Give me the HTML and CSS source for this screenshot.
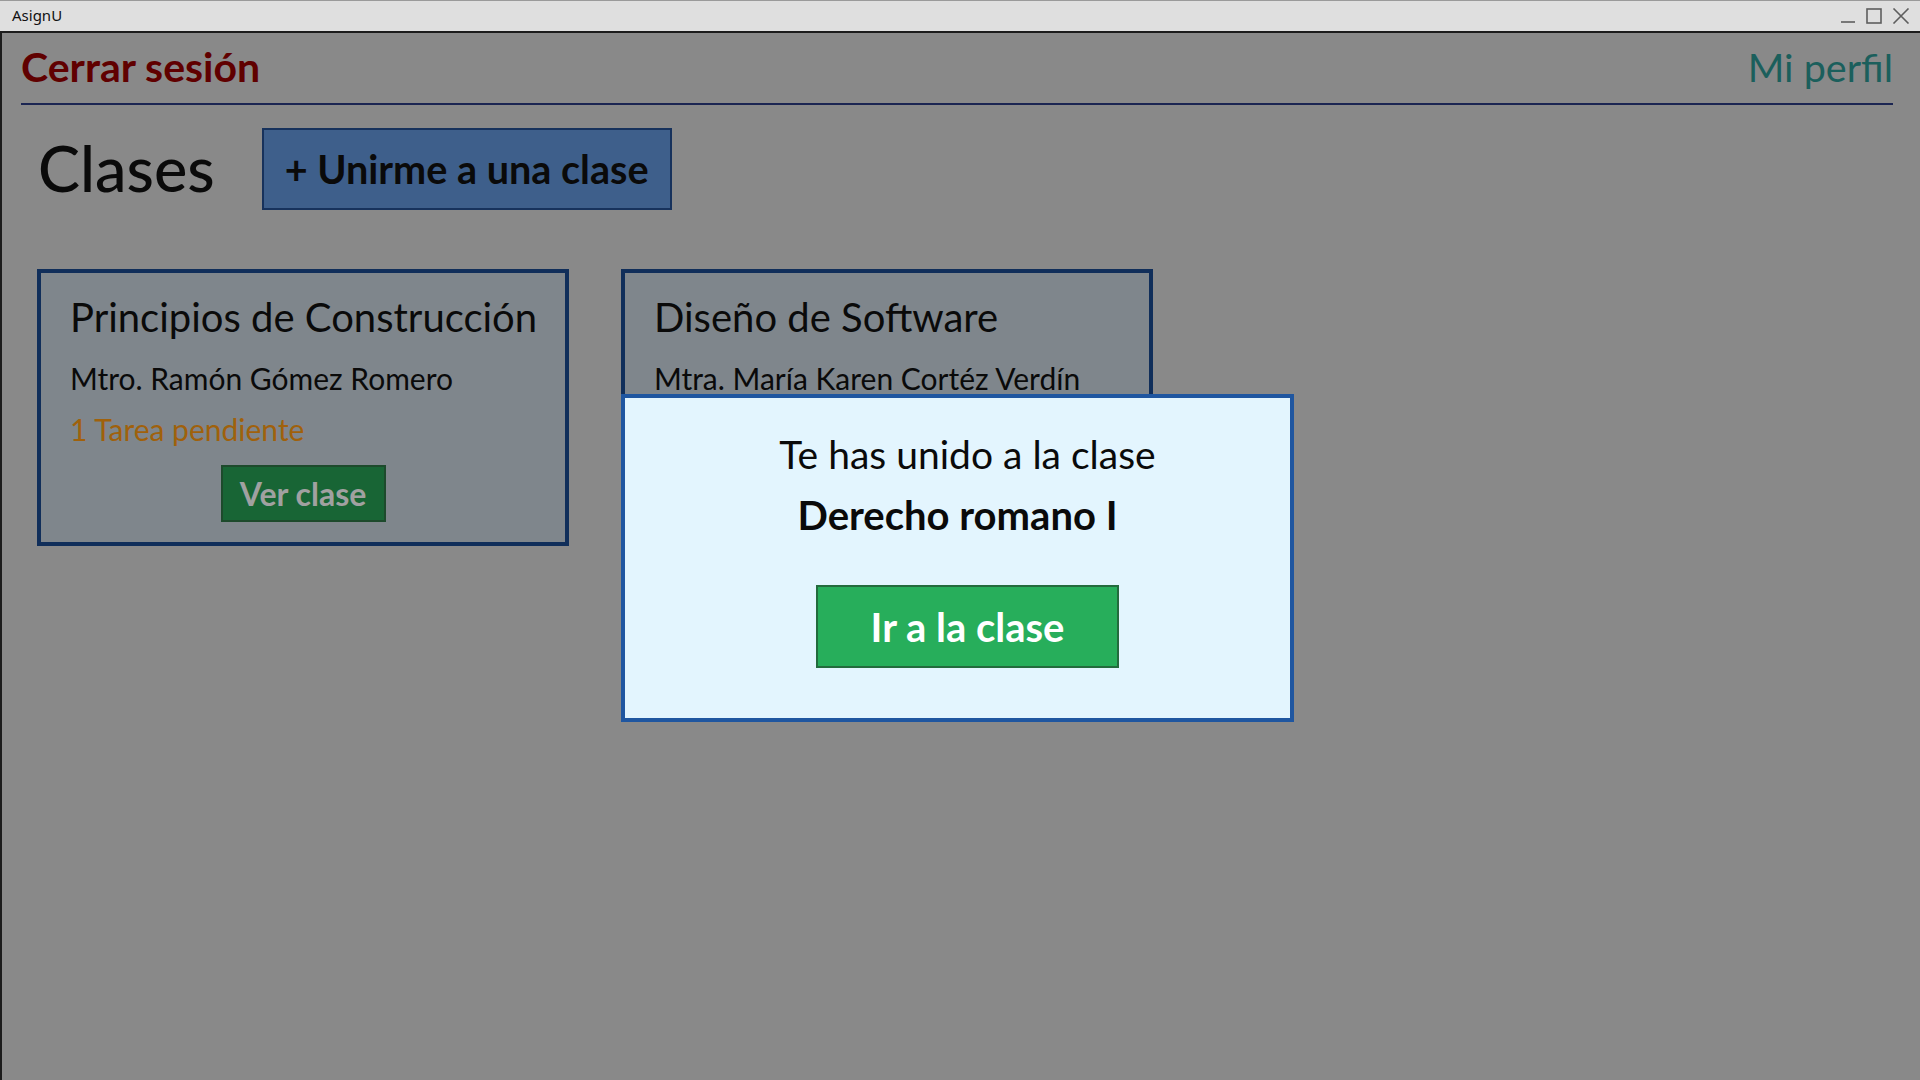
FILE: index.html
```html
<!DOCTYPE html>
<html lang="es">
<head>
<meta charset="utf-8">
<title>AsignU</title>
<link rel="stylesheet" href="styles.css">
</head>
<body>
<div class="window">
  <div class="titlebar">
    <span class="app-name">AsignU</span>
    <div class="controls">
      <svg class="ctl" width="16" height="16" viewBox="0 0 16 16"><line x1="1" y1="14" x2="15" y2="14" stroke="#5e5e5e" stroke-width="1.6"/></svg>
      <svg class="ctl" width="16" height="16" viewBox="0 0 16 16"><rect x="1" y="1" width="14" height="14" fill="none" stroke="#5e5e5e" stroke-width="1.6"/></svg>
      <svg class="ctl" width="18" height="16" viewBox="0 0 18 16"><path d="M1.5 0.5 L16.5 15.5 M16.5 0.5 L1.5 15.5" stroke="#5e5e5e" stroke-width="1.6" fill="none"/></svg>
    </div>
  </div>
  <div class="app">
    <header class="topbar">
      <a class="logout">Cerrar sesión</a>
      <a class="profile">Mi perfil</a>
    </header>
    <section class="classes-head">
      <h1 class="title">Clases</h1>
      <button class="join-btn">+ Unirme a una clase</button>
    </section>
    <section class="cards">
      <article class="card">
        <h2 class="card-title">Principios de Construcción</h2>
        <p class="teacher">Mtro. Ramón Gómez Romero</p>
        <p class="pending">1 Tarea pendiente</p>
        <div class="card-actions"><button class="view-btn">Ver clase</button></div>
      </article>
      <article class="card">
        <h2 class="card-title">Diseño de Software</h2>
        <p class="teacher">Mtra. María Karen Cortéz Verdín</p>
      </article>
    </section>
    <div class="modal">
      <p class="modal-text">Te has unido a la clase</p>
      <p class="modal-class">Derecho romano I</p>
      <button class="go-btn">Ir a la clase</button>
    </div>
  </div>
</div>
</body>
</html>
```
FILE: styles.css
```css
* { box-sizing: border-box; }
html, body { margin: 0; padding: 0; }
body {
  width: 1920px;
  height: 1080px;
  overflow: hidden;
  background: #898989;
  font-family: Lato, "Noto Sans", sans-serif;
}
.window { display: flex; flex-direction: column; height: 1080px; }
.titlebar {
  height: 33px;
  background: #dfdfdf;
  border-top: 1px solid #9a9a9a;
  border-bottom: 2px solid #1c1c1c;
  display: flex;
  align-items: center;
  justify-content: space-between;
  padding: 0 10px 0 12px;
}
.app-name {
  font-family: "Noto Sans", "Liberation Sans", sans-serif;
  font-size: 15px;
  color: #111;
  margin-top: -2px;
}
.controls { display: flex; gap: 10px; align-items: center; }
.ctl { display: block; }
.app {
  position: relative;
  flex: 1;
  border-left: 2px solid #1c1c1c;
  background: #898989;
}
.topbar {
  display: flex;
  justify-content: space-between;
  align-items: baseline;
  margin: 0 27px 0 19px;
  padding-top: 9px;
  padding-bottom: 11px;
  border-bottom: 2px solid #1b2552;
  font-size: 41px;
  line-height: 50px;
}
.logout { font-weight: 700; color: #600000; }
.profile { color: #1b5f5c; font-weight: 400; font-size: 39.5px; }
.classes-head {
  display: flex;
  align-items: center;
  gap: 47px;
  margin: 23px 0 0 36px;
}
.title {
  margin: -3px 0 0;
  font-size: 63px;
  font-weight: 500;
  line-height: 1.2;
  color: #0a0a0a;
}
.join-btn {
  font-family: Lato, sans-serif;
  font-size: 39.6px;
  font-weight: 700;
  line-height: 50px;
  height: 82px;
  padding: 0 21px;
  background: #3e5f8b;
  border: 2px solid #17325c;
  color: #0a0a0a;
}
.cards {
  display: flex;
  gap: 52px;
  margin: 59px 0 0 35px;
}
.card {
  width: 532px;
  height: 277px;
  background: #7f868c;
  border: 4px solid #102e5a;
  padding: 20px 20px 0 29px;
  color: #0a0a0a;
}
.card-title {
  margin: 0;
  font-size: 40px;
  font-weight: 400;
  line-height: 48px;
}
.teacher {
  margin: 19px 0 0;
  font-size: 30px;
  line-height: 36px;
}
.pending {
  margin: 15px 0 0;
  font-size: 30px;
  line-height: 36px;
  color: #a0610b;
}
.card-actions {
  display: flex;
  justify-content: center;
  margin: 18px 0 0 -9px;
}
.view-btn {
  font-family: Lato, sans-serif;
  width: 165px;
  height: 57px;
  font-size: 32px;
  font-weight: 700;
  line-height: 40px;
  padding: 0;
  background: #186535;
  border: 2px solid #1d4a2c;
  color: #a1a1a1;
}
.modal {
  position: absolute;
  left: 619px;
  top: 361px;
  width: 673px;
  height: 328px;
  background: #e3f5fe;
  border: 4px solid #1f56a0;
  display: flex;
  flex-direction: column;
  align-items: center;
  padding-top: 33px;
  color: #0a0a0a;
}
.modal-text {
  margin: 0 0 0 20px;
  font-size: 39px;
  line-height: 46px;
}
.modal-class {
  margin: 14px 0 0;
  font-size: 40px;
  font-weight: 700;
  line-height: 48px;
}
.go-btn {
  margin: 46px 0 0 20px;
  width: 303px;
  height: 83px;
  font-family: Lato, sans-serif;
  font-size: 40px;
  font-weight: 700;
  line-height: 48px;
  padding: 0;
  background: #27ae5b;
  border: 2px solid #236b3d;
  color: #fff;
}
```
